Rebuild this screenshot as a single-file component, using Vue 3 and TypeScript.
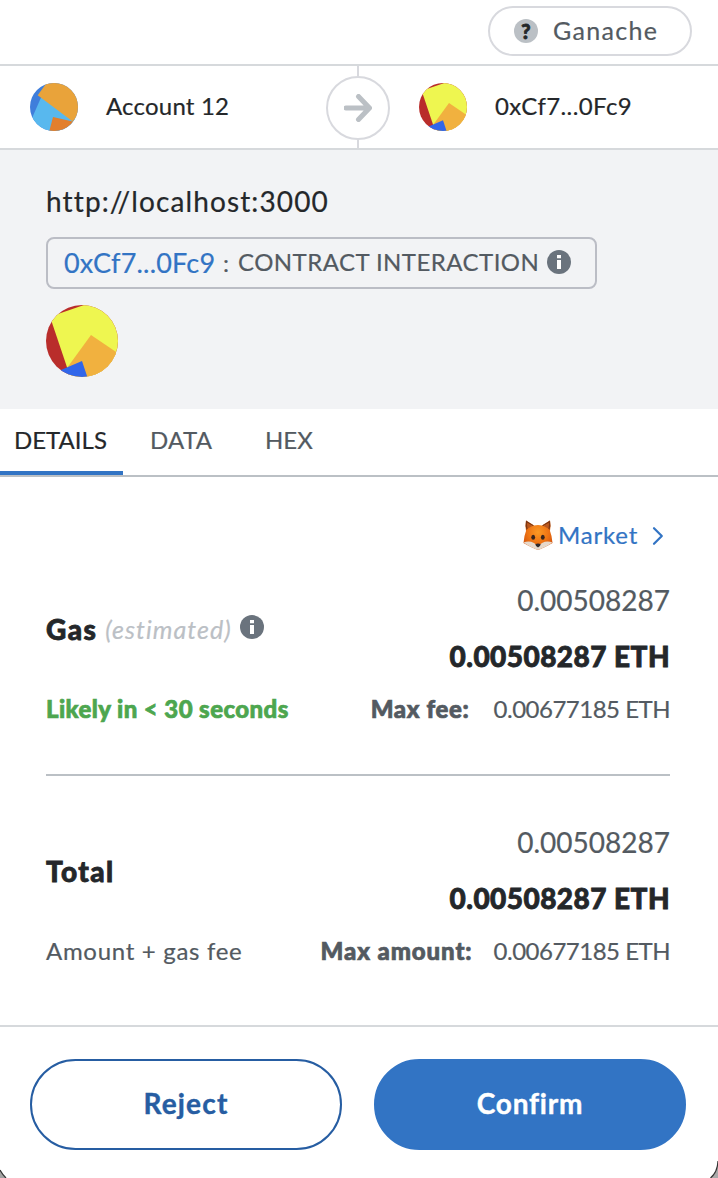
<script setup lang="ts">
interface FeeBlock {
  key: string
  title: string
  note: string
  primary: string
  secondary: string
  caption: string
  maxLabel: string
  maxValue: string
  estimated: boolean
}

const tabs = [
  { label: 'DETAILS', cls: 'tab-details' },
  { label: 'DATA', cls: 'tab-data' },
  { label: 'HEX', cls: 'tab-hex' },
]

const blocks: FeeBlock[] = [
  {
    key: 'gas',
    title: 'Gas',
    note: '(estimated)',
    primary: '0.00508287',
    secondary: '0.00508287 ETH',
    caption: 'Likely in < 30 seconds',
    maxLabel: 'Max fee:',
    maxValue: '0.00677185 ETH',
    estimated: true,
  },
  {
    key: 'total',
    title: 'Total',
    note: '',
    primary: '0.00508287',
    secondary: '0.00508287 ETH',
    caption: 'Amount + gas fee',
    maxLabel: 'Max amount:',
    maxValue: '0.00677185 ETH',
    estimated: false,
  },
]
</script>

<template>
  <div class="window">
    <header class="network-bar">
      <div class="network">
        <span class="network-mark">?</span>
        <span class="network-name">Ganache</span>
      </div>
    </header>

    <section class="parties">
      <div class="party">
        <svg class="avatar" viewBox="0 0 48 48">
          <clipPath id="clip-a"><circle cx="24" cy="24" r="24" /></clipPath>
          <g clip-path="url(#clip-a)">
            <rect width="48" height="48" fill="#3f7edb" />
            <path d="M11 14.5L-3 46.500L20 60L50 40L30 20Z" fill="#58b8ee" />
            <path d="M23 34L46 39.300L40 60L16.200 60Z" fill="#e27f2d" />
            <path d="M18 -2L7.700 12.300L42.700 38.500L60 20L40 -10Z" fill="#e9a33a" />
          </g>
        </svg>
        <span class="party-name from-name">Account 12</span>
      </div>
      <div class="divider">
        <div class="arrow">
          <svg width="28" height="28" viewBox="0 0 28 28">
            <path d="M2 14H24M14.500 2.500L25.500 14L14.500 25.500" fill="none" stroke="#bbc0c5" stroke-width="5" stroke-linecap="round" stroke-linejoin="round" />
          </svg>
        </div>
      </div>
      <div class="party">
        <svg class="avatar" viewBox="0 0 72 72">
          <clipPath id="clip-b"><circle cx="36" cy="36" r="36" /></clipPath>
          <g clip-path="url(#clip-b)">
            <rect width="72" height="72" fill="#b92d2b" />
            <path d="M4 11.700L38 0L90 -10L90 80L27 80Z" fill="#eef650" />
            <path d="M45 30L76 51L70 80L20 80L21 63Z" fill="#f1b13f" />
            <path d="M12 66.300L36 56L44 80L10 80Z" fill="#3166ea" />
          </g>
        </svg>
        <span class="party-name to-name">0xCf7...0Fc9</span>
      </div>
    </section>

    <section class="summary">
      <div class="origin">http://localhost:3000</div>
      <div class="action">
        <span class="address">0xCf7...0Fc9</span>
        <span class="colon">:</span>
        <span class="action-name">CONTRACT INTERACTION</span>
        <svg class="info" viewBox="0 0 24 24">
          <circle cx="12" cy="12" r="12" fill="#6a737d" />
          <path d="M10 5h4v3.200h-4zM10 10h4v9h-4z" fill="#fff" />
        </svg>
      </div>
      <svg class="contract-avatar" viewBox="0 0 72 72">
        <clipPath id="clip-c"><circle cx="36" cy="36" r="36" /></clipPath>
        <g clip-path="url(#clip-c)">
          <rect width="72" height="72" fill="#b92d2b" />
          <path d="M4 11.700L38 0L90 -10L90 80L27 80Z" fill="#eef650" />
          <path d="M45 30L76 51L70 80L20 80L21 63Z" fill="#f1b13f" />
          <path d="M12 66.300L36 56L44 80L10 80Z" fill="#3166ea" />
        </g>
      </svg>
    </section>

    <nav class="tabs">
      <div v-for="tab in tabs" :key="tab.label" class="tab" :class="tab.cls">
        <span>{{ tab.label }}</span>
      </div>
    </nav>

    <main class="details">
      <div class="market">
        <svg class="fox" viewBox="0 0 30 30">
          <defs>
            <radialGradient id="fur" cx="0.5" cy="0.4" r="0.6">
              <stop offset="0" stop-color="#fb9a24" />
              <stop offset="0.6" stop-color="#ee7414" />
              <stop offset="1" stop-color="#d4560e" />
            </radialGradient>
          </defs>
          <path d="M3 0.500Q2 6 3 11L1.500 16L0.500 23Q4 25 8 27L13 29.300Q15 30 17 29.300L22 27Q26 25 29.500 23L28.500 16L27 11Q28 6 27 0.500L19 5.500Q15 4.500 11 5.500Z" fill="url(#fur)" />
          <path d="M3 0.500Q2 6 3.500 10L4.800 8.500L4.300 3L9.500 6L11 5.500Z" fill="#7d3714" />
          <path d="M27 0.500Q28 6 26.500 10L25.200 8.500L25.700 3L20.500 6L19 5.500Z" fill="#7d3714" />
          <path d="M4.300 3L4.800 8.500L9.500 6ZM25.700 3L25.200 8.500L20.500 6Z" fill="#b9581f" />
          <path d="M0.500 22.500Q6 20.500 11 23L13.500 25H16.500L19 23Q24 20.500 29.500 22.500Q26 25 22 27L17 29.300Q15 30 13 29.300L8 27Q4 25 0.500 22.500Z" fill="#e6d9cc" />
          <ellipse cx="10.200" cy="17.300" rx="1.900" ry="2.500" fill="#38251d" />
          <ellipse cx="19.800" cy="17.300" rx="1.900" ry="2.500" fill="#38251d" />
          <path d="M12.300 24.200Q15 22.700 17.700 24.200Q17.300 26.500 15 27.600Q12.700 26.500 12.300 24.200Z" fill="#30292a" />
        </svg>
        <span class="market-label">Market</span>
        <svg class="chevron" viewBox="0 0 12 20">
          <path d="M2 2.200L9.800 10L2 17.800" fill="none" stroke="#3274c4" stroke-width="2.200" stroke-linecap="round" stroke-linejoin="round" />
        </svg>
      </div>

      <div v-for="b in blocks" :key="b.key" class="fee" :class="b.key">
        <div class="fee-main">
          <div class="fee-title">
            <span class="title-text">{{ b.title }}</span>
            <span v-if="b.note" class="note">{{ b.note }}</span>
            <svg v-if="b.estimated" class="info" viewBox="0 0 24 24">
              <circle cx="12" cy="12" r="12" fill="#6a737d" />
              <path d="M10 5h4v3.200h-4zM10 10h4v9h-4z" fill="#fff" />
            </svg>
          </div>
          <div class="amounts">
            <div class="primary">{{ b.primary }}</div>
            <div class="secondary">{{ b.secondary }}</div>
          </div>
        </div>
        <div class="fee-foot">
          <span class="caption">{{ b.caption }}</span>
          <span class="max"><b>{{ b.maxLabel }}</b><span class="max-value">{{ b.maxValue }}</span></span>
        </div>
      </div>
    </main>

    <footer class="actions">
      <button class="btn reject" type="button">Reject</button>
      <button class="btn confirm" type="button">Confirm</button>
    </footer>

    <svg class="corner left" viewBox="0 0 8 10">
      <path d="M0 2Q2.500 6.500 6 10H0Z" fill="#a3a3a3" />
      <path d="M0 2Q2.500 6.500 6 10" fill="none" stroke="#333" stroke-width="1.200" />
    </svg>
    <svg class="corner right" viewBox="0 0 8 20">
      <path d="M8 4Q7.500 14 0.500 20H8Z" fill="#aaa" />
      <path d="M8 3Q7.500 14 0.500 20" fill="none" stroke="#333" stroke-width="1.200" />
    </svg>
  </div>
</template>

<style>
body {
  margin: 0;
  background: #fff;
}
</style>

<style scoped>
.window {
  position: relative;
  box-sizing: border-box;
  width: 718px;
  height: 1178px;
  overflow: hidden;
  background: #fff;
  color: #24272a;
  font-family: Lato, 'Liberation Sans', sans-serif;
  font-size: 24px;
  font-variant-ligatures: none;
  -webkit-text-stroke-width: 0.2px;
  white-space: nowrap;
}
.window * {
  box-sizing: border-box;
}
svg {
  display: block;
  flex: none;
}
.network-bar {
  display: flex;
  justify-content: flex-end;
  height: 66px;
  padding: 6px 26px 0 0;
  border-bottom: 2px solid #d6d9dc;
}
.network {
  display: flex;
  align-items: center;
  width: 204px;
  height: 50px;
  padding-left: 24px;
  border: 2px solid #d8d9de;
  border-radius: 25px;
}
.network-mark {
  width: 24px;
  height: 24px;
  border-radius: 50%;
  background: #bbc0c5;
  font-size: 20px;
  font-weight: 900;
  line-height: 24px;
  text-align: center;
  -webkit-text-stroke-width: 0.8px;
}
.network-name {
  margin-left: 15px;
  padding-bottom: 3px;
  color: #535a61;
  font-size: 25px;
  letter-spacing: 1.3px;
}
.parties {
  display: grid;
  grid-template-columns: 326px 64px 1fr;
  height: 84px;
  border-bottom: 2px solid #d6d9dc;
}
.party {
  display: flex;
  align-items: center;
  padding-left: 30px;
}
.party:last-child {
  padding-left: 29px;
}
.avatar {
  width: 48px;
  height: 48px;
}
.party-name {
  margin-left: 28px;
  padding-bottom: 3px;
}
.from-name {
  letter-spacing: 0.2px;
}
.to-name {
  letter-spacing: 0.4px;
}
.divider {
  display: flex;
  align-items: center;
  justify-content: center;
  background: linear-gradient(#d8d9de, #d8d9de) center / 2px 100% no-repeat;
}
.arrow {
  display: flex;
  align-items: center;
  justify-content: center;
  width: 64px;
  height: 64px;
  margin-top: 2px;
  border: 2px solid #d8d9de;
  border-radius: 50%;
  background: #fff;
}
.summary {
  height: 259px;
  padding: 34px 46px 0;
  background: #f2f3f5;
}
.origin {
  height: 36px;
  font-size: 28px;
  line-height: 34px;
  letter-spacing: 1.13px;
}
.action {
  display: flex;
  align-items: center;
  width: 551px;
  height: 52px;
  margin-top: 17px;
  padding-left: 16px;
  border: 2px solid #bbbdc5;
  border-radius: 8px;
  color: #535a61;
}
.address {
  width: 151px;
  padding-bottom: 1px;
  color: #3274c4;
  font-size: 27px;
  letter-spacing: 0.2px;
}
.colon {
  width: 23px;
  padding-bottom: 2px;
  padding-left: 8px;
}
.action-name {
  padding-bottom: 3px;
  letter-spacing: 0.45px;
}
.info {
  width: 24px;
  height: 24px;
}
.action .info {
  margin-left: auto;
  margin-right: 24px;
  margin-bottom: 2px;
}
.contract-avatar {
  width: 72px;
  height: 72px;
  margin-top: 16px;
}
.tabs {
  display: flex;
  height: 68px;
  border-bottom: 2px solid #bbc0c5;
  color: #535a61;
}
.tab {
  height: 66px;
  line-height: 62px;
}
.tab-details {
  width: 123px;
  padding-left: 14px;
  border-bottom: 4px solid #3274c4;
  color: #24272a;
}
.tab-data {
  width: 142px;
  padding-left: 27px;
  letter-spacing: 0.3px;
}
.details {
  height: 548px;
  padding: 42px 48px 0 46px;
}
.market {
  display: flex;
  align-items: center;
  justify-content: flex-end;
  height: 34px;
  padding-right: 6px;
  color: #3274c4;
}
.fox {
  width: 30px;
  height: 30px;
  margin-bottom: 2px;
}
.market-label {
  width: 79px;
  margin-left: 5px;
  padding-bottom: 4px;
  letter-spacing: 0.8px;
}
.chevron {
  width: 12px;
  height: 20px;
  margin-left: 15px;
}
.fee {
  height: 242px;
}
.gas {
  height: 223px;
  border-bottom: 2px solid #bbc0c5;
}
.total {
  padding-top: 19px;
}
.fee-main {
  display: flex;
  align-items: center;
  justify-content: space-between;
  height: 142px;
  padding-top: 10px;
}
.fee-title {
  display: flex;
  align-items: center;
  margin-top: -1px;
}
.title-text {
  font-size: 28px;
  font-weight: 900;
  letter-spacing: 1.4px;
  -webkit-text-stroke-width: 0.8px;
}
.note {
  margin-left: 8px;
  color: #bbc0c5;
  font-size: 25px;
  font-style: italic;
  letter-spacing: 1.05px;
}
.fee-title .info {
  margin-left: 8px;
  margin-bottom: 3px;
}
.amounts {
  margin-top: -2px;
  text-align: right;
  font-size: 28px;
  line-height: 56px;
}
.primary {
  color: #535a61;
}
.secondary {
  font-weight: 900;
  letter-spacing: 0.45px;
  -webkit-text-stroke-width: 0.8px;
}
.fee-foot {
  display: flex;
  justify-content: space-between;
  line-height: 28px;
  color: #535a61;
}
.caption {
  letter-spacing: 0.7px;
}
.gas .caption {
  color: #4da64f;
  font-weight: 900;
  letter-spacing: 0.42px;
  -webkit-text-stroke-width: 0.7px;
}
.max b {
  font-weight: 900;
  letter-spacing: 0.65px;
  -webkit-text-stroke-width: 0.7px;
}
.total .max b {
  letter-spacing: 0.9px;
}
.max-value {
  margin-left: 24px;
  letter-spacing: -0.5px;
}
.total .max-value {
  margin-left: 21px;
}
.actions {
  display: flex;
  gap: 32px;
  height: 153px;
  padding: 32px 30px 0;
  border-top: 2px solid #d6d9dc;
}
.btn {
  width: 312px;
  height: 91px;
  padding: 0 0 3px;
  border: 2px solid #265da2;
  border-radius: 46px;
  background: #fff;
  color: #265da2;
  font-family: inherit;
  font-size: 28px;
  font-weight: 700;
  letter-spacing: 1.2px;
  font-variant-ligatures: none;
  -webkit-text-stroke-width: 0.4px;
}
.confirm {
  border-color: #3274c4;
  background: #3274c4;
  color: #fff;
  letter-spacing: 0.8px;
}
.corner {
  position: absolute;
  bottom: 0;
}
.left {
  left: 0;
  width: 8px;
  height: 10px;
}
.right {
  right: 0;
  width: 8px;
  height: 20px;
}
</style>
